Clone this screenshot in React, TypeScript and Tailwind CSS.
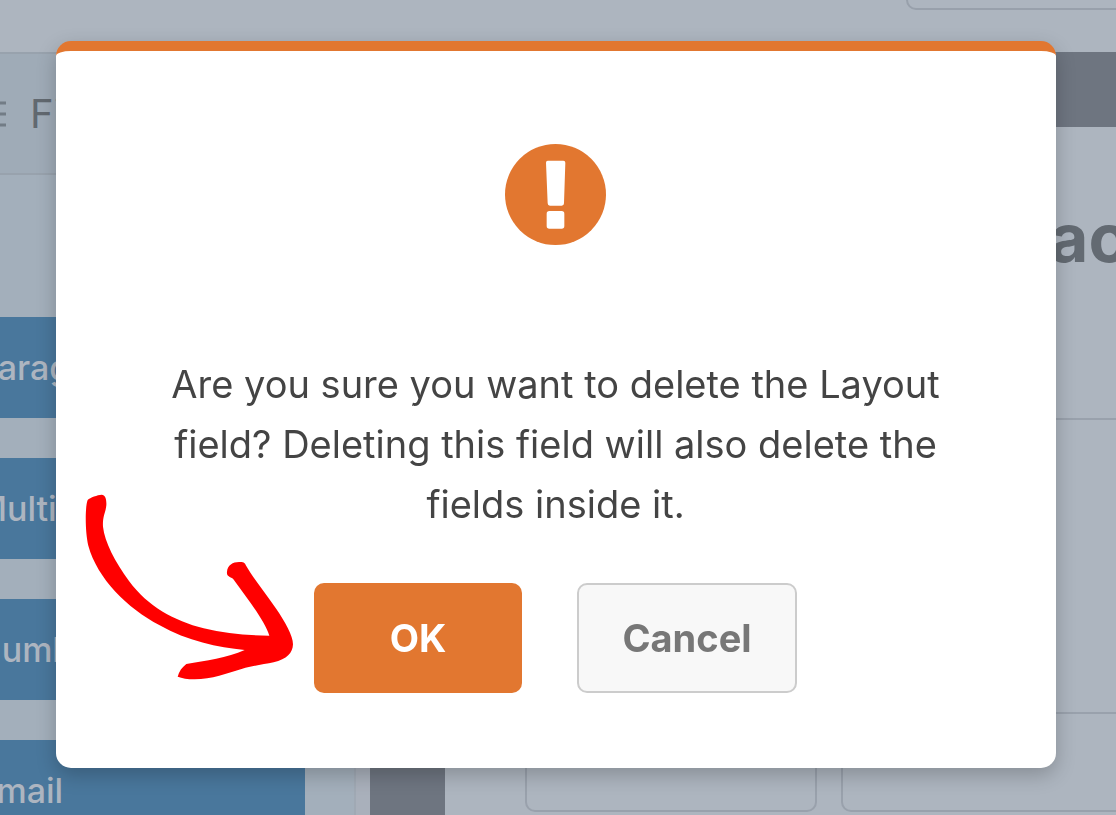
const fieldButtons = ["Paragraph", "Multiple", "Numbers", "Email"];

function TopBar() {
  return (
    <header className="flex h-[52px] shrink-0 justify-end overflow-hidden">
      <div className="-mt-4 -mr-4 h-[26px] w-[226px] rounded-[10px] border-2 border-[#98a0ab]" />
    </header>
  );
}

function Sidebar() {
  return (
    <aside className="w-[356px] shrink-0 overflow-hidden border-r-2 border-[#a0a9b4] bg-[#a3afbb]">
      <div className="flex h-[123px] items-center border-y-2 border-[#98a2ad] bg-[#9fabb7] text-[#626970]">
        <svg className="-ml-6 h-7 w-[30px] shrink-0" viewBox="0 0 30 28" stroke="#727c86" strokeWidth="3" aria-hidden="true">
          <path d="M0 3h30M0 14h30M0 25h30" />
        </svg>
        <h2 className="ml-6 text-[40px]">Fields</h2>
      </div>
      <div className="mt-[142px] mr-[49px] flex flex-col gap-10">
        {fieldButtons.map((label) => (
          <button key={label} type="button" className="h-[101px] bg-[#49779c] text-left text-[34px] font-medium text-[#adb5c0]">
            <span className="-ml-6 whitespace-nowrap">{label}</span>
          </button>
        ))}
      </div>
    </aside>
  );
}

function FormPreview() {
  return (
    <main className="min-w-0 flex-1 overflow-hidden bg-[#6e7580] pt-[75px] pl-[75px]">
      <div className="h-full bg-[#adb5bf]">
        <div className="h-[293px] border-b-2 border-[#99a1ac] pt-[71px] pl-[208px]">
          <h1 className="text-[67px] leading-[80px] font-bold whitespace-nowrap text-[#636a72]">Simple Contact Form</h1>
        </div>
        <div className="h-[294px] border-b-2 border-[#99a1ac]" />
        <div className="flex gap-6 pl-20">
          <div className="h-[98px] w-[292px] shrink-0 rounded-b-[10px] border-2 border-t-0 border-[#99a1ac]" />
          <div className="-mr-4 h-[98px] flex-1 rounded-b-[10px] border-2 border-t-0 border-[#99a1ac]" />
        </div>
      </div>
    </main>
  );
}

function AlertIcon() {
  return (
    <svg className="size-[101px]" viewBox="45 40 303 303" aria-hidden="true">
      <circle cx="196.500" cy="191.500" r="151.500" fill="#e27730" />
      <path
        fill="#fff"
        d="M173 90h47q6 0 6 6l-4 122q0 7-7 7h-35q-7 0-7-7l-5-122q0-6 5-6ZM178 241h37q8 0 8 8v37q0 8-8 8h-37q-8 0-8-8v-37q0-8 8-8Z"
      />
    </svg>
  );
}

function Arrow() {
  return (
    <svg className="absolute top-[442px] left-[27px] h-[189px] w-[212px]" viewBox="70 40 636 567" aria-hidden="true">
      <path
        fill="#f00"
        d="M84 61C92 53 113 46 126 45C137 45 141 58 140 77C139 95 128 110 130 141C135 187 166 246 208 304C265 381 343 423 432 446C495 462 560 467 629 468C617 428 570 365 520 297C510 291 500 288 502 277C503 256 520 247 538 247C551 247 555 248 558 256C580 295 614 335 650 388C676 426 700 468 700 494C699 520 682 538 642 548C612 555 575 558 548 567C503 581 456 598 405 599C383 599 367 596 354 591C358 575 367 563 380 553C438 544 503 534 555 511C475 504 383 484 300 437C203 385 113 297 86 198C76 157 76 80 84 61Z"
      />
    </svg>
  );
}

function DeleteDialog() {
  return (
    <div className="fixed inset-0 overflow-hidden pt-[41px] pr-[60px] pl-14">
      <div
        role="alertdialog"
        aria-describedby="delete-message"
        className="relative flex flex-col items-center rounded-[15px] border-t-10 border-[#e27730] bg-white pt-[93px] pr-px pb-[75px] shadow-[0_7px_20px_rgba(0,0,0,0.22)]"
      >
        <AlertIcon />
        <p id="delete-message" className="mt-[109px] max-w-[800px] text-center text-[38px] leading-[60px] text-[#444]">
          Are you sure you want to delete the Layout field? Deleting this field will also delete the fields inside it.
        </p>
        <div className="mt-[49px] flex gap-[55px] text-[38px] font-bold">
          <button type="button" className="h-[110px] w-[208px] rounded-[10px] bg-[#e27730] text-white">
            OK
          </button>
          <button type="button" className="h-[110px] w-[220px] rounded-[10px] border-2 border-[#ccc] bg-[#f8f8f8] text-[#777]">
            Cancel
          </button>
        </div>
        <Arrow />
      </div>
    </div>
  );
}

export default function App() {
  return (
    <div className="flex h-screen flex-col overflow-hidden bg-[#adb5bf] font-['Inter',sans-serif]">
      <TopBar />
      <div className="flex min-h-0 flex-1">
        <Sidebar />
        <div className="w-3.5 shrink-0 bg-[#a9b0bb]" />
        <FormPreview />
      </div>
      <DeleteDialog />
    </div>
  );
}
